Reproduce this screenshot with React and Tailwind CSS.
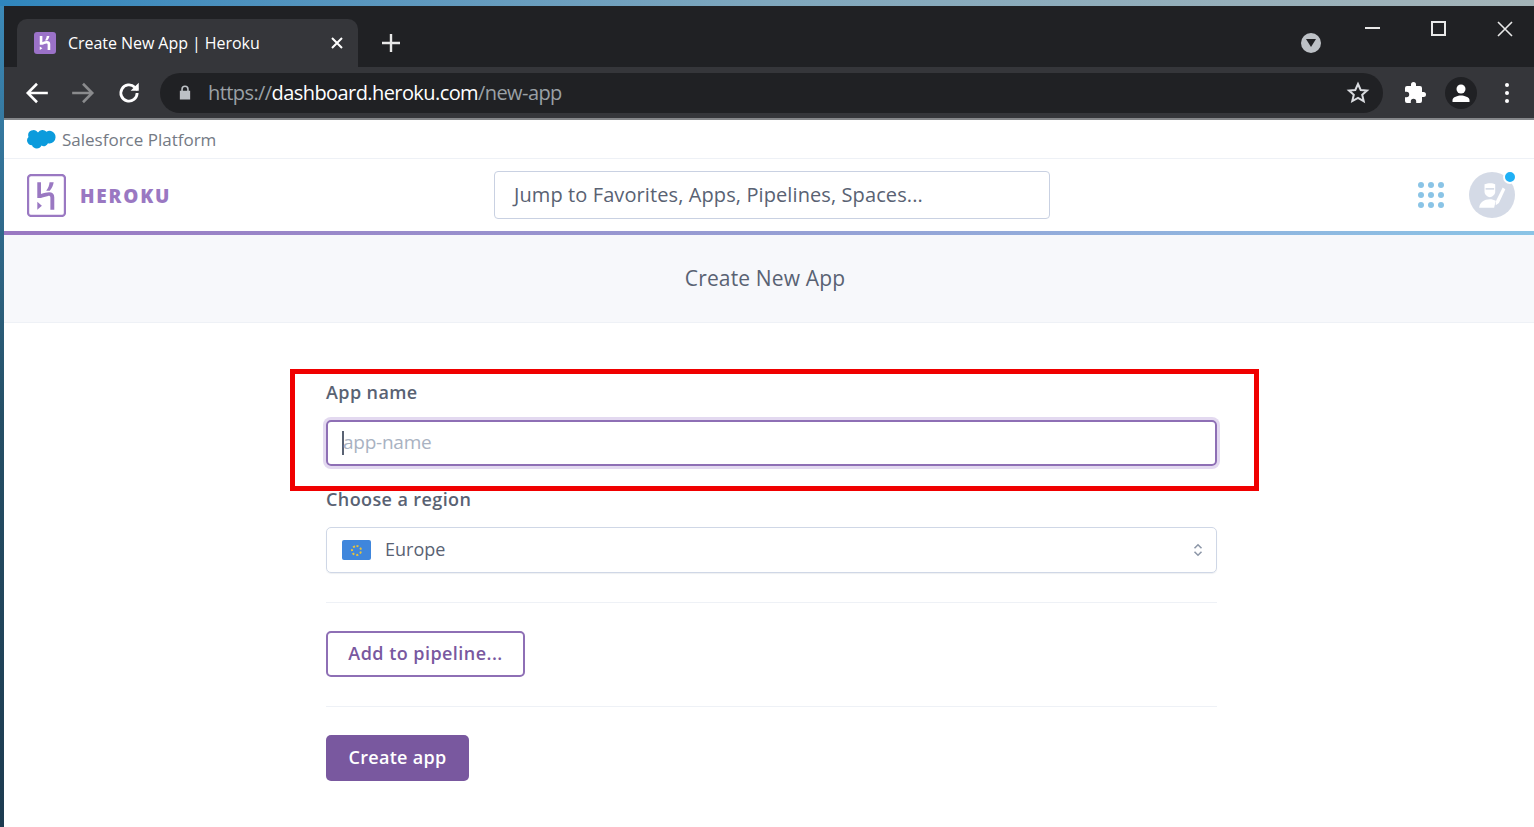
import React from "react";

const Sans = "font-['Open_Sans','Liberation_Sans',sans-serif]";

function HerokuGlyph({ className, stroke = "#79589f" }) {
  return (
    <svg viewBox="0 0 38 42" className={className}>
      <rect x="1" y="1" width="36" height="40" rx="3" fill="none" stroke={stroke} strokeWidth="2.2" />
      <path d="M10 8h3.600v11.500c3-1 5.600-1.700 8-1.700 3 0 5 1.700 5 4.800V35h-3.800V23.200c0-1.500-.8-2-2.200-1.800-2.300.3-5.600 1.500-7 2.100H10z" fill={stroke} />
      <path d="M22 8h4c-.4 3-1.700 6-3.800 8.300h-3.500C20.700 14 21.700 11 22 8z" fill={stroke} />
      <path d="M10 27l4.500 4-4.500 4z" fill={stroke} />
    </svg>
  );
}

function Arrow({ dir, color }) {
  return (
    <svg viewBox="0 0 24 24" className="w-[26px] h-[26px]" fill="none" stroke={color} strokeWidth="2.400">
      {dir === "left" ? <path d="M22 12H3.500M12 3.500 3.500 12l8.500 8.500" /> : <path d="M2 12h18.500M12 3.500l8.500 8.500-8.500 8.500" />}
    </svg>
  );
}

function Dots() {
  return (
    <div className="grid grid-cols-3 gap-x-[4px] gap-y-[4px] w-[26px]">
      {[0, 1, 2, 3, 4, 5, 6, 7, 8].map((i) => (
        <span key={i} className="w-[6px] h-[6px] rounded-full bg-[#8ac4e6]" />
      ))}
    </div>
  );
}

export default function App() {
  return (
    <div className={`relative w-[1534px] h-[827px] overflow-hidden bg-white ${Sans}`}>
      <div className="h-[6px] bg-gradient-to-r from-[#2f86bd] via-[#7fa7bd] to-[#a4b4b8]" />
      <div className="flex h-[821px]">
        <div className="w-[4px] shrink-0 bg-gradient-to-b from-[#3c8ab8] via-[#254f66] to-[#1d3b50]" />
        <div className="flex-1 min-w-0 flex flex-col">
          {/* Tab strip */}
          <div className="h-[61px] bg-[#202124] flex items-end pl-[13px] relative">
            <div className="w-[341px] h-[48px] bg-[#35363a] rounded-t-[10px] flex items-center pl-[17px] pr-[15px]">
              <div className="w-[22px] h-[22px] rounded-[3px] bg-[#9b72c8] flex items-center justify-center">
                <svg viewBox="0 0 16 18" className="w-[14px] h-[16px]" fill="#fff">
                  <path d="M2 1h3v7c2.500-1 4-1.300 5.500-1.300 2.300 0 3.500 1.300 3.500 3.500V17h-3v-6.300c0-.9-.5-1.200-1.300-1.100-1.500.2-3.500.9-4.700 1.400H2z" />
                  <path d="M10 1h3c-.3 2-1.200 3.800-2.500 5H8c1-1.300 1.800-3 2-5z" />
                  <path d="M2 13l3 2-3 2z" />
                </svg>
              </div>
              <span className="ml-[12px] text-[16px] text-white tracking-[-0.05px] flex-1 whitespace-nowrap">Create New App | Heroku</span>
              <svg viewBox="0 0 12 12" className="w-[12px] h-[12px]" stroke="#fff" strokeWidth="2"><path d="M1 1l10 10M11 1 1 11" /></svg>
            </div>
            <svg viewBox="0 0 18 18" className="w-[18px] h-[18px] ml-[24px] mb-[15px]" stroke="#e8e8e8" strokeWidth="2.400"><path d="M9 0v18M0 9h18" /></svg>
            <div className="flex-1" />
            <div className="w-[20px] h-[20px] rounded-full bg-[#bdc1c6] flex items-center justify-center mb-[14px] mr-[213px]">
              <svg viewBox="0 0 10 8" className="w-[10px] h-[8px]" fill="#202124"><path d="M0 0h10L5 8z" /></svg>
            </div>
            {/* window controls */}
            <div className="absolute right-0 top-[15px] flex items-start">
              <div className="w-[15px] h-[2px] bg-[#e8e8e8] mt-[6px] mr-[51px]" />
              <div className="w-[15px] h-[15px] border-2 border-[#e8e8e8] mr-[51px] mt-0" />
              <svg viewBox="0 0 16 16" className="w-[16px] h-[16px] mr-[21px]" stroke="#e8e8e8" strokeWidth="1.600"><path d="M1 1l14 14M15 1 1 15" /></svg>
            </div>
          </div>
          {/* Toolbar */}
          <div className="h-[53px] bg-[#35363a] border-b-2 border-[#85878a] flex items-center pl-[20px]">
            <Arrow dir="left" color="#ffffff" />
            <div className="ml-[20px]"><Arrow dir="right" color="#8a8b8d" /></div>
            <svg viewBox="0 0 24 24" className="w-[26px] h-[26px] ml-[20px]" fill="none" stroke="#fff" strokeWidth="2.600">
              <path d="M19.500 12a7.500 7.500 0 1 1-2.200-5.300L20 9" />
              <path d="M21 2.500V10h-7.500z" fill="#fff" stroke="none" />
            </svg>
            <div className="ml-[18px] w-[1223px] h-[40px] rounded-full bg-[#202124] flex items-center pl-[19px] pr-[13px]">
              <svg viewBox="0 0 12 16" className="w-[12px] h-[15px]" fill="#bdc1c6"><path d="M2 6V4.500a4 4 0 0 1 8 0V6h1.500v9.500H.5V6zm1.700 0h4.600V4.500a2.300 2.300 0 0 0-4.600 0z" /></svg>
              <span className="ml-[17px] pt-[1px] text-[20px] tracking-[-0.58px] text-[#9aa0a6] whitespace-nowrap flex-1">
                https://<span className="text-white">dashboard.heroku.com</span>/new-app
              </span>
              <svg viewBox="0 0 24 24" className="w-[24px] h-[24px]" fill="none" stroke="#dadce0" strokeWidth="2"><path d="m12 3 2.700 6 6.300.6-4.800 4.200 1.500 6.300L12 16.800 6.300 20l1.500-6.200L3 9.600 9.300 9z" /></svg>
            </div>
            <svg viewBox="0 0 24 24" className="w-[24px] h-[24px] ml-[20px]" fill="#fff"><path d="M20.500 11H19V7a2 2 0 0 0-2-2h-4V3.500a2.500 2.500 0 0 0-5 0V5H4a2 2 0 0 0-2 2v3.800h1.500a2.700 2.700 0 0 1 0 5.400H2V20a2 2 0 0 0 2 2h3.800v-1.500a2.700 2.700 0 0 1 5.400 0V22H17a2 2 0 0 0 2-2v-4h1.500a2.500 2.500 0 0 0 0-5z" /></svg>
            <div className="w-[32px] h-[32px] rounded-full bg-[#202124] ml-[18px] flex items-center justify-center">
              <svg viewBox="0 0 24 24" className="w-[24px] h-[24px]" fill="#fff"><circle cx="12" cy="8" r="4.500" /><path d="M3.500 21v-2c0-3 5.500-4.500 8.500-4.500s8.500 1.500 8.500 4.500v2z" /></svg>
            </div>
            <div className="ml-[28px] flex flex-col gap-[4px]">
              <span className="w-[4px] h-[4px] rounded-full bg-white" />
              <span className="w-[4px] h-[4px] rounded-full bg-white" />
              <span className="w-[4px] h-[4px] rounded-full bg-white" />
            </div>
          </div>
          {/* Salesforce */}
          <div className="h-[39px] border-b border-[#eef1f6] flex items-center pl-[22px]">
            <svg viewBox="0 0 30 21" className="w-[30px] h-[21px]" fill="#0b9bdc">
              <path d="M12 3.500a5.500 5.500 0 0 1 8.500-.8 6 6 0 0 1 9 5.300 6 6 0 0 1-7.500 6.300 4.500 4.500 0 0 1-6.500 2.200 5.200 5.200 0 0 1-9.500-.3A4.800 4.800 0 0 1 2.500 8 5.300 5.300 0 0 1 12 3.500z" />
            </svg>
            <span className="ml-[6px] text-[17px] tracking-[0px] text-[#747a84] pt-[1px]">Salesforce Platform</span>
          </div>
          {/* Heroku header */}
          <div className="h-[72px] flex items-center pl-[23px]">
            <HerokuGlyph className="w-[39px] h-[43px]" stroke="#9a78c2" />
            <span className="ml-[14px] w-[99px] font-extrabold text-[19px] tracking-[1.8px] text-[#9a78c2] pt-[2px]">HEROKU</span>
            <div className="ml-[315px] w-[556px] h-[48px] rounded-[4px] border border-[#c9d1e2] flex items-center pl-[19px] text-[20px] tracking-[0.1px] text-[#596273]">
              Jump to Favorites, Apps, Pipelines, Spaces...
            </div>
            <div className="ml-[368px]"><Dots /></div>
            <div className="relative ml-[25px] w-[46px] h-[46px] rounded-full bg-[#d4dae6] flex items-center justify-center">
              <svg viewBox="0 0 30 30" className="w-[32px] h-[32px]" fill="#fff">
                <path d="M8 5c3-1.500 8-1.500 10 0v7c0 3-3 5-5 5s-5-2-5-5z" />
                <path d="M3 27c0-5 5-8 10-8 2 0 4 .5 5.500 1.500L17 27z" />
                <path d="M25 8l2.500 1.500-6 13-3 2 0-3.500z" />
                <path d="M9 8.500h8v1.500H9z" fill="#d4dae6" />
              </svg>
              <span className="absolute -top-[2px] right-[-2px] w-[14px] h-[14px] rounded-full bg-[#1fb0f5] border-2 border-white" />
            </div>
          </div>
          <div className="h-[4px] shrink-0 bg-gradient-to-r from-[#9a78c2] to-[#8ac4e6]" />
          {/* Title band */}
          <div className="h-[88px] shrink-0 bg-[#f7f8fb] border-b border-[#eef1f6] flex items-center justify-center pr-[8px] text-[21px] tracking-[0.15px] text-[#596273]">
            Create New App
          </div>
          {/* Form */}
          <div className="pl-[322px] w-[1213px] pt-[55px]">
            <div className="text-[18px] leading-[28px] font-semibold tracking-[0.4px] text-[#596273]">App name</div>
            <div className="mt-[14px] h-[46px] rounded-[5px] border-2 border-[#8e6fb5] shadow-[0_0_0_3px_#e3d9f0] flex items-center pl-[14px] relative">
              <span className="w-[2px] h-[24px] bg-[#596273]" />
              <span className="text-[19px] tracking-[-0.25px] text-[#a9b2c2] -ml-[1px] -mt-[2px]">app-name</span>
            </div>
            <div className="mt-[19px] text-[18px] leading-[28px] font-semibold tracking-[0.4px] text-[#596273]">Choose a region</div>
            <div className="mt-[14px] h-[46px] rounded-[5px] border border-[#cfd7e6] flex items-center pl-[15px] pr-[13px] shadow-[0_1px_1px_rgba(89,105,129,0.1)]">
              <div className="w-[29px] h-[20px] rounded-[2px] bg-[#3f86dc] flex items-center justify-center">
                <span className="w-[11px] h-[11px] rounded-full border-2 border-dotted border-[#e8c33a]" />
              </div>
              <span className="ml-[14px] -mt-[2px] flex-1 text-[18px] tracking-[0px] text-[#596273]">Europe</span>
              <svg viewBox="0 0 10 16" className="w-[10px] h-[14px]" fill="none" stroke="#8d97a8" strokeWidth="1.800"><path d="M1 6l4-4 4 4M1 10l4 4 4-4" /></svg>
            </div>
            <div className="mt-[29px] h-px bg-[#eef1f6]" />
            <button className="mt-[28px] block w-[199px] h-[46px] pb-[2px] rounded-[5px] border-2 border-[#8e6fb5] text-[18px] font-semibold tracking-[0.45px] text-[#79589f]">Add to pipeline...</button>
            <div className="mt-[29px] h-px bg-[#eef1f6]" />
            <button className="mt-[28px] block w-[143px] h-[46px] pb-[2px] rounded-[5px] bg-[#79589f] text-[18px] font-semibold tracking-[0.3px] text-white">Create app</button>
          </div>
        </div>
      </div>
      {/* Annotation */}
      <div className="absolute left-[290px] top-[369px] w-[969px] h-[122px] border-[5px] border-[#f00000] pointer-events-none" />
    </div>
  );
}
